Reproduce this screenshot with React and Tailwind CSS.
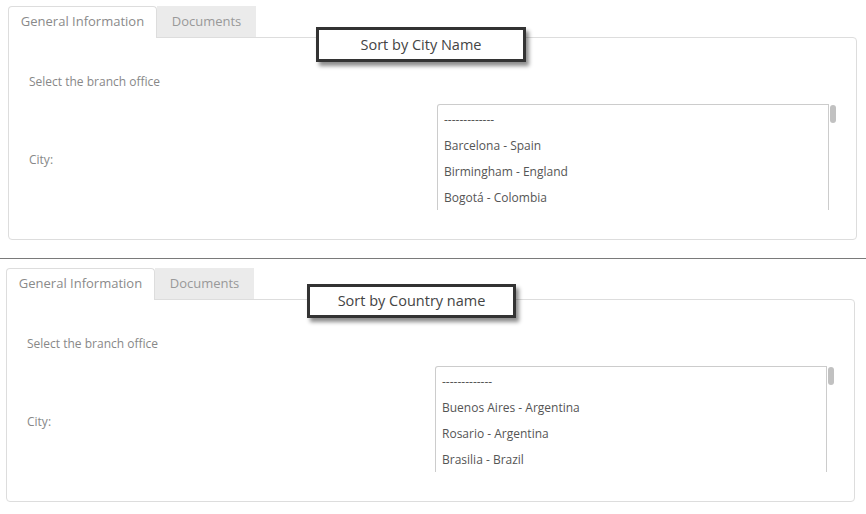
const font = { fontFamily: '"Open Sans", "Liberation Sans", sans-serif' };

const Tabs = () => (
  <div className="flex h-[31px]">
    <div className="w-[149px] h-[32px] border border-b-0 border-[#dddddd] rounded-t-[4px] bg-white flex items-center justify-center pb-[2px] text-[13px] text-[#8a8a8a] relative z-10">
      General Information
    </div>
    <div className="w-[99px] h-[31px] bg-[#ebebeb] flex items-center justify-center text-[13px] text-[#999999]">
      Documents
    </div>
  </div>
);

const Listbox = ({ items }) => (
  <div className="relative w-[392px]">
    <div className="h-[106px] border border-b-0 border-[#cccccc] rounded-tl-[3px] overflow-hidden pl-[6px] pt-[2px]">
      <div className="h-[26px] flex items-center text-[12px] text-[#555555]">-------------</div>
      {items.map((it) => (
        <div key={it} className="h-[26px] flex items-center text-[12px] text-[#555555]">
          {it}
        </div>
      ))}
    </div>
    <div className="absolute top-[1px] right-[-7px] w-[6px] h-[18px] rounded-[3px] bg-[#c1c1c1]" />
  </div>
);

const Section = ({ label, items, labelClass }) => (
  <div className="relative w-[849px]">
    <Tabs />
    <div className="h-[203px] border border-[#dddddd] rounded-b-[4px] rounded-tr-[4px] pl-[20px] pt-[36px]">
      <div className="h-[16px] leading-[16px] text-[12px] text-[#888888]">Select the branch office</div>
      <div className="flex items-center mt-[14px]">
        <div className="w-[408px] text-[12px] text-[#888888] pt-[6px]">City:</div>
        <Listbox items={items} />
      </div>
    </div>
    <div className={labelClass}>
      <span className="text-[14.5px] text-[#444444]">{label}</span>
    </div>
  </div>
);

export default function App() {
  return (
    <div className="w-[866px] h-[514px] bg-white overflow-hidden" style={font}>
      <div className="pl-[8px] pt-[6px]">
        <Section
          label="Sort by City Name"
          items={["Barcelona - Spain", "Birmingham - England", "Bogotá - Colombia"]}
          labelClass="absolute left-[308px] top-[21px] w-[210px] h-[35px] border-[3px] border-[#333333] bg-white flex items-center justify-center shadow-[3px_4px_4px_rgba(0,0,0,0.45)] z-20"
        />
      </div>
      <div className="h-px bg-[#7a7a7a] mt-[18px]" />
      <div className="pl-[6px] pt-[9px]">
        <Section
          label="Sort by Country name"
          items={["Buenos Aires - Argentina", "Rosario - Argentina", "Brasilia - Brazil"]}
          labelClass="absolute left-[301px] top-[16px] w-[209px] h-[34px] border-[3px] border-[#333333] bg-white flex items-center justify-center shadow-[3px_4px_4px_rgba(0,0,0,0.45)] z-20"
        />
      </div>
    </div>
  );
}
